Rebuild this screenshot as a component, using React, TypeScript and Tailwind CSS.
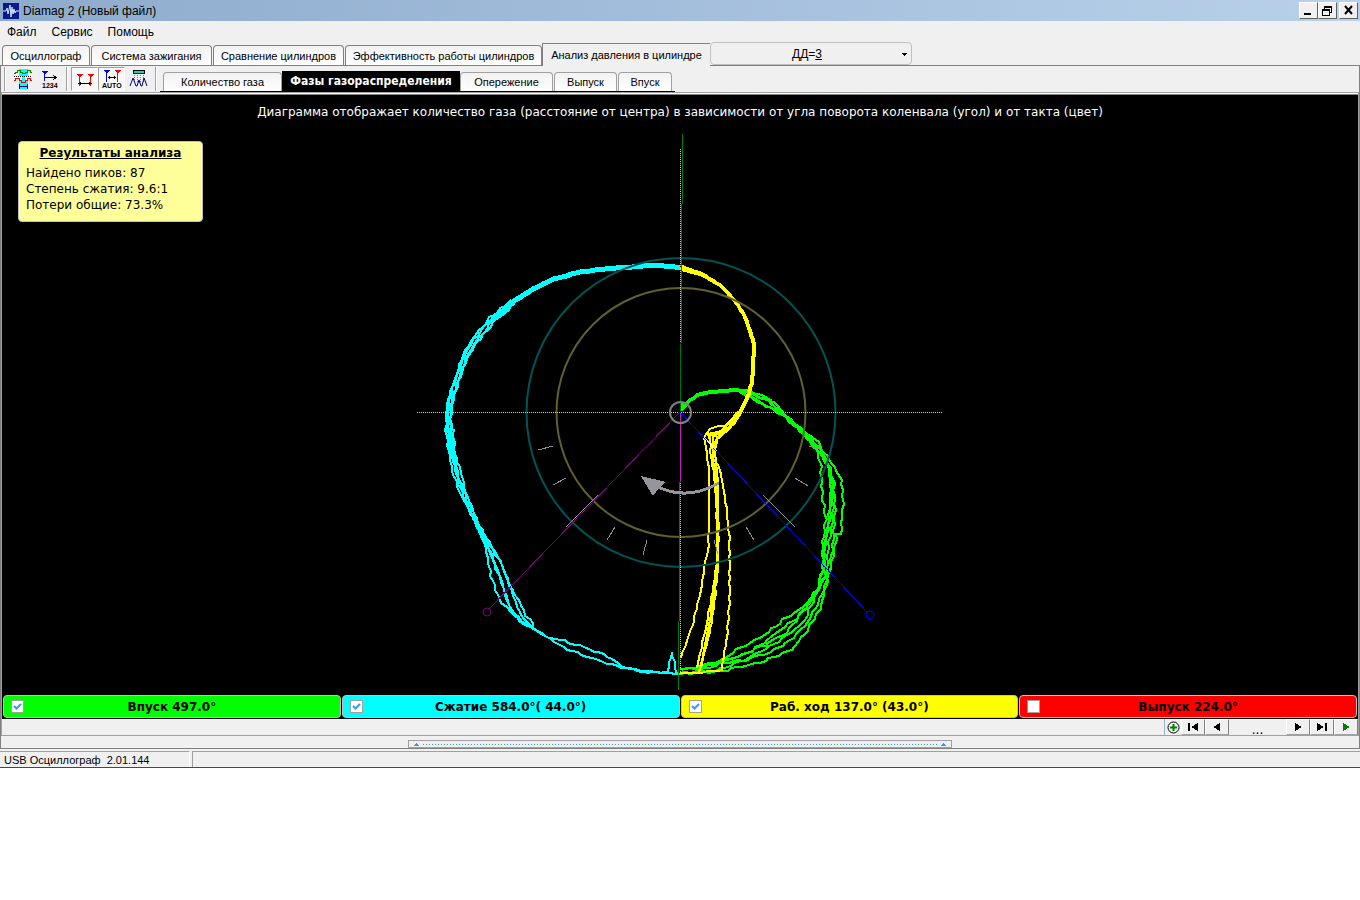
import { ReactNode, useState } from "react";

type Point = [number, number];

const mainTabs = [
  { label: "Осциллограф", width: "w-[88px]" },
  { label: "Система зажигания", width: "w-[121px]" },
  { label: "Сравнение цилиндров", width: "w-[131px]" },
  { label: "Эффективность работы цилиндров", width: "w-[197px]" },
];

const subTabs = [
  { label: "Опережение", width: "w-[93px]" },
  { label: "Выпуск", width: "w-[63px]" },
  { label: "Впуск", width: "w-[54px]" },
];

const phases = [
  { label: "Впуск 497.0°", color: "bg-[#00ff00]", on: true },
  { label: "Сжатие 584.0°( 44.0°)", color: "bg-[#00ffff]", on: true },
  { label: "Раб. ход 137.0° (43.0°)", color: "bg-[#ffff00]", on: true },
  { label: "Выпуск 224.0°", color: "bg-[#ff0000]", on: false },
];

// Adds small steps between the points so a strand looks like sampled data
const strand = (points: Point[], noise: number, seed: number) => {
  const out: string[] = [];
  for (let i = 0; i < points.length - 1; i++) {
    const [x1, y1] = points[i];
    const [x2, y2] = points[i + 1];
    const steps = Math.max(1, Math.round(Math.hypot(x2 - x1, y2 - y1) / 5));
    for (let s = 0; s < steps; s++) {
      const k = out.length + seed * 17;
      const dx = Math.sin(k * 2.3) * noise;
      const dy = Math.cos(k * 1.7) * noise;
      const t = s / steps;
      out.push(
        `${Math.round(x1 + (x2 - x1) * t + dx)},${Math.round(y1 + (y2 - y1) * t + dy)}`,
      );
    }
  }
  const last = points[points.length - 1];
  out.push(`${last[0]},${last[1]}`);
  return out.join(" ");
};

const compressionTop: Point[] = [
  [680, 267], [653, 265], [627, 267], [600, 269], [580, 272], [553, 279],
  [533, 289], [513, 302], [492, 320], [475, 340], [465, 357], [457, 380],
  [451, 397], [449, 417], [450, 437], [453, 460],
];

const compression: Point[][] = [
  [[455, 380], [446, 408], [446, 430], [451, 467], [456, 482], [462, 497], [473, 518], [482, 537], [487, 553], [491, 576], [496, 590], [502, 604], [510, 610], [520, 621], [535, 630], [550, 639], [565, 640], [567, 644], [580, 645], [590, 650], [603, 654], [612, 659], [617, 664], [630, 669], [647, 672], [667, 673], [672, 652], [676, 672], [680, 674]],
  [[453, 430], [455, 453], [461, 472], [466, 493], [473, 510], [480, 527], [487, 538], [497, 555], [504, 570], [510, 587], [520, 602], [525, 615], [530, 619], [534, 628], [550, 639], [563, 647], [577, 653], [597, 660], [617, 666], [640, 671], [680, 674]],
  [[450, 430], [454, 462], [460, 482], [470, 508], [482, 533], [492, 556], [500, 575], [506, 596], [512, 612], [524, 623], [535, 630]],
  [[449, 430], [453, 458], [459, 484], [469, 510], [480, 532], [488, 549], [498, 573], [504, 588], [508, 605], [518, 618], [535, 630]],
  [[452, 440], [458, 476], [468, 500], [478, 522], [490, 546], [503, 566], [508, 582], [514, 598], [521, 616], [535, 630]],
];

const powerTop: Point[] = [
  [681, 267], [700, 273], [720, 285], [735, 301], [743, 313], [750, 330],
  [754, 345], [753, 363], [752, 383], [747, 398], [740, 413], [732, 425],
];

const power: Point[][] = [
  [[740, 413], [728, 424], [710, 429], [704, 437], [707, 453], [709, 473], [709, 527], [708, 550], [704, 567], [701, 590], [692, 627], [681, 658]],
  [[740, 413], [732, 425], [713, 437], [713, 460], [716, 477], [717, 530], [717, 577], [712, 623], [702, 663], [699, 673]],
  [[742, 410], [730, 428], [716, 440], [712, 455], [720, 470], [725, 497], [729, 533], [730, 593], [727, 637], [722, 670], [697, 673], [680, 673]],
  [[740, 415], [724, 432], [710, 436], [711, 456], [716, 490], [719, 530], [717, 563], [713, 587], [707, 623], [697, 668]],
  [[738, 412], [722, 430], [708, 434], [713, 450], [715, 480], [718, 540], [716, 580], [709, 628], [701, 668]],
  [[742, 411], [727, 431], [717, 437], [715, 455], [718, 480], [718, 570], [712, 610], [703, 655], [699, 672]],
];

const intakeTop: Point[] = [
  [681, 410], [687, 403], [697, 395], [710, 392], [737, 390], [750, 392],
];

const intake: Point[][] = [
  [[750, 392], [765, 397], [775, 403], [782, 413], [803, 430], [817, 452], [821, 463], [822, 497], [826, 520], [822, 547], [823, 570], [817, 590], [803, 607], [783, 620], [760, 638], [732, 652], [723, 660], [710, 665], [682, 670]],
  [[737, 390], [750, 397], [763, 404], [777, 412], [793, 423], [807, 433], [818, 442], [827, 457], [832, 463], [842, 480], [843, 500], [841, 533], [837, 535], [833, 557], [828, 577], [820, 610], [807, 630], [792, 650], [760, 662], [723, 671], [680, 673]],
  [[745, 391], [770, 401], [785, 415], [805, 434], [820, 448], [832, 473], [833, 497], [832, 527], [828, 547], [827, 573], [815, 597], [803, 623], [787, 635], [770, 647], [743, 660], [720, 664], [690, 673]],
  [[745, 393], [766, 406], [780, 412], [800, 431], [814, 446], [828, 462], [831, 490], [829, 520], [824, 550], [825, 575], [812, 600], [796, 620], [786, 633], [765, 645], [742, 655], [722, 662], [700, 668], [680, 669]],
  [[748, 391], [772, 404], [790, 420], [810, 440], [824, 460], [834, 480], [835, 510], [833, 545], [829, 572], [822, 595], [808, 622], [790, 641], [770, 652], [740, 662], [715, 671], [680, 674]],
  [[742, 391], [768, 400], [788, 418], [808, 435], [822, 452], [830, 470], [831, 510], [827, 535], [823, 565], [818, 590], [800, 615], [780, 630], [768, 640], [744, 655], [720, 661], [690, 668]],
];

const ticks = [
  "M538 450L553 446", "M553 485L566 478", "M566 527L598 495", "M607 540L615 527",
  "M643 555L647 540", "M754 540L746 527", "M808 486L795 478", "M795 527L763 495",
  "M823 450L809 446", "M718 554L714 540",
].join("");

const PhaseDiagram = () => (
  <svg
    className="mx-auto block h-[560px] w-[540px]"
    viewBox="410 130 540 560"
    fill="none"
    shapeRendering="crispEdges"
    role="img"
    aria-label="Фазы газораспределения"
  >
    {/* Curves */}
    <g stroke="#00ff00" strokeWidth="2">
      <polyline points={strand(intakeTop, 0, 1)} strokeWidth="4" />
      <path d="M680 404L690 400L681 412Z" fill="#00ff00" stroke="none" />
      {intake.map((points, i) => (
        <polyline key={i} points={strand(points, 1, i)} />
      ))}
    </g>
    <g stroke="#00ffff" strokeWidth="2">
      <polyline points={strand(compressionTop.slice(0, 9), 0, 1)} strokeWidth="5" />
      {[-2, -1, 1, 2].map((shift) => (
        <polyline
          key={shift}
          points={strand(
            compressionTop.slice(7).map(([x, y]): Point => [x + shift, y + shift]),
            0.7,
            shift,
          )}
        />
      ))}
      {compression.map((points, i) => (
        <polyline key={i} points={strand(points, 0.7, i)} />
      ))}
    </g>
    <g stroke="#ffff00" strokeWidth="2">
      <polyline points={strand(powerTop, 0, 1)} strokeWidth="4" />
      <path d="M681 264V271L700 276L715 284L700 273Z" fill="#ffff00" stroke="none" />
      {power.map((points, i) => (
        <polyline key={i} points={strand(points, 0.5, i)} />
      ))}
    </g>

    {/* Scale circles */}
    <circle cx="681" cy="412.5" r="154.500" stroke="#005454" strokeWidth="2" shapeRendering="auto" />
    <circle cx="681" cy="412.5" r="124.500" stroke="#606030" strokeWidth="2" shapeRendering="auto" />
    <path d={ticks} stroke="#909090" />

    {/* Axes */}
    <path d="M417 412.5H943M680.5 149V672" stroke="#d0d0d0" strokeDasharray="1 1" />
    <path d="M682.5 134V204M681.5 204V343M680.5 343V412M679.5 482V621M678.5 621V690" stroke="#008000" />
    <path d="M680.5 343V412" stroke="#800080" strokeDasharray="1 1" />
    <path d="M680.5 412V482" stroke="#c020c0" />
    <path d="M680 412L489 609" stroke="#780078" />
    <circle cx="487" cy="612" r="4" stroke="#800080" shapeRendering="auto" />
    <path d="M680 412L868 613" stroke="#0000ff" />
    <circle cx="870" cy="615" r="4" stroke="#0000ff" shapeRendering="auto" />
    <path d="M704 437L717 451" stroke="#ffffff" />
    <circle cx="680.5" cy="412.5" r="10.500" stroke="#808080" strokeWidth="2" shapeRendering="auto" />

    {/* Rotation arrow */}
    <path d="M658 487Q688 501 719 483" stroke="#98949c" strokeWidth="3" />
    <path d="M641 476L666 482L660 487L653 496Z" fill="#98949c" />
  </svg>
);

const Icon = ({ children }: { children: ReactNode }) => (
  <svg className="h-5 w-5 overflow-visible" viewBox="0 0 20 20" fill="none" shapeRendering="crispEdges">
    {children}
  </svg>
);

const ToolButton = ({
  label,
  pressed,
  children,
}: {
  label: string;
  pressed?: boolean;
  children: ReactNode;
}) => (
  <button
    aria-label={label}
    className={`flex h-6 w-[27px] items-center justify-center border ${
      pressed
        ? "border-t-[#a0a0a0] border-r-white border-b-white border-l-[#a0a0a0] bg-[#f8f8f8]"
        : "border-transparent"
    }`}
  >
    {children}
  </button>
);

const Separator = () => (
  <span className="mx-[3px] h-6 w-[2px] border-l border-[#a0a0a0] bg-white" />
);

const PlayButton = ({ label, path, color }: { label: string; path: string; color: string }) => (
  <button
    aria-label={label}
    className="flex h-4 w-6 items-center justify-center border border-t-white border-r-[#808080] border-b-[#a0a0a0] border-l-white"
  >
    <svg className={`h-2 w-3 ${color}`} viewBox="0 0 12 8" fill="currentColor" shapeRendering="crispEdges">
      <path d={path} />
    </svg>
  </button>
);

const App = () => {
  const [checked, setChecked] = useState(phases.map((phase) => phase.on));

  const toggle = (index: number) =>
    setChecked(checked.map((value, i) => (i === index ? !value : value)));

  return (
    <div className="w-full bg-[#f0f0f0] font-['Liberation_Sans',sans-serif] text-[11px] leading-4 text-black">
      {/* Title bar */}
      <header className="flex h-[21px] items-center bg-linear-to-r from-[#8eabcd] to-[#b9d1ea] pr-[2px] pl-[3px]">
        <svg className="h-4 w-4" viewBox="0 0 16 16">
          <rect width="16" height="16" fill="#0a1a8c" />
          <path d="M0 8H3L4 5L5 11L7 2L8 14L9 4L10 11L11 6L12 10L13 8H16" fill="none" stroke="#d8e8ff" />
        </svg>
        <h1 className="ml-1 flex-1 text-xs">Diamag 2 (Новый файл)</h1>
        <button aria-label="Свернуть" className="h-[17px] w-[19px] border border-t-white border-r-[#606060] border-b-[#606060] border-l-white bg-[#f0f0f0]">
          <svg className="h-[15px] w-[17px]" viewBox="0 0 17 15" shapeRendering="crispEdges">
            <path d="M4 10H11V12H4Z" />
          </svg>
        </button>
        <button aria-label="Восстановить" className="h-[17px] w-[19px] border border-t-white border-r-[#606060] border-b-[#606060] border-l-white bg-[#f0f0f0]">
          <svg className="h-[15px] w-[17px]" viewBox="0 0 17 15" fill="none" stroke="#000" shapeRendering="crispEdges">
            <path d="M5.500 6V3.500H12.500V9.500H11M5 4.500H13M3.500 6.500H10.500V12.500H3.500ZM3 7.500H11" />
          </svg>
        </button>
        <button aria-label="Закрыть" className="ml-[2px] h-[17px] w-[19px] border border-t-white border-r-[#606060] border-b-[#606060] border-l-white bg-[#f0f0f0]">
          <svg className="h-[15px] w-[17px]" viewBox="0 0 17 15" fill="none" stroke="#000" strokeWidth="2">
            <path d="M5 3L12 11M12 3L5 11" />
          </svg>
        </button>
      </header>

      {/* Menu */}
      <nav className="flex h-[21px] items-center gap-[15px] pl-[7px] text-xs">
        <button>Файл</button>
        <button>Сервис</button>
        <button>Помощь</button>
      </nav>

      {/* Main tabs */}
      <div className="flex h-6 items-end border-b border-[#808080] pl-[2px]">
        {mainTabs.map((tab) => (
          <button
            key={tab.label}
            className={`mr-px h-5 rounded-t-sm border border-b-0 border-[#808080] bg-linear-to-b from-[#f2f2f2] to-white whitespace-nowrap ${tab.width}`}
          >
            {tab.label}
          </button>
        ))}
        <button className="-mb-px -ml-px h-[23px] w-[168px] border-t border-l border-[#808080] bg-[#f0f0f0] whitespace-nowrap">
          Анализ давления в цилиндре
        </button>
        <div className="relative h-[23px] w-[202px] self-start rounded-sm border border-[#c0c0c0]">
          <select aria-label="Датчик давления" className="h-full w-full appearance-none text-transparent">
            <option>ДД=3</option>
          </select>
          <span aria-hidden="true" className="pointer-events-none absolute inset-0 flex items-center justify-center pr-2 text-xs">
            ДД=<u>3</u>
          </span>
          <svg className="pointer-events-none absolute top-[10px] right-1 h-[3px] w-[5px]" viewBox="0 0 5 3" shapeRendering="crispEdges">
            <path d="M0 0H5L3 3H2Z" />
          </svg>
        </div>
      </div>

      <main className="border-x border-b border-[#808080]">
        {/* Toolbar */}
        <div className="flex h-[26px] items-end">
          <div className="flex h-full flex-none items-center">
            <Separator />
            <ToolButton label="Форма сигнала">
              <Icon>
                <path d="M6 0H15V7H12V12H15V20H6V12H9V7H6Z" fill="#00ffff" />
                <path d="M1 4.500H2V3.500H4V1.500H7V3.500H9V4.500H12V3.500H14V1.500H17V3.500H19" stroke="#008000" />
                <path d="M1 7.500H19" stroke="#000" strokeDasharray="1 1" />
                <path d="M1 11.500H2V9.500H6V11.500H8V13.500H12V11.500H14V9.500H17V11.500H19" stroke="#ff0000" />
                <path d="M6 17.500H15M6.500 15V20M14.500 15V20" stroke="#0000a0" />
              </Icon>
            </ToolButton>
            <ToolButton label="Номер метки">
              <Icon>
                <path d="M1 2H8L5 5V12H4V5Z" fill="#0000ff" />
                <path d="M5 8.500H16M13 6L16 8.500L13 11" stroke="#000" />
                <text x="2" y="19" className="fill-black text-[7px] font-bold">1234</text>
              </Icon>
            </ToolButton>
            <Separator />
            <ToolButton label="Метки" pressed>
              <Icon>
                <path d="M1 5H8L5 8V17H4V8ZM12 5H19L16 8V17H15V8Z" fill="#ff0000" />
                <path d="M3 14.500H17M5.500 13V16M14.500 13V16" stroke="#000" />
              </Icon>
            </ToolButton>
            <ToolButton label="Автоматические метки" pressed>
              <Icon>
                <path d="M1 1H8L5 4V13H4V4Z" fill="#0000ff" />
                <path d="M12 1H19L16 4V13H15V4Z" fill="#ff0000" />
                <path d="M6 8.500H14M7.500 7V10M12.500 7V10" stroke="#000" />
                <text x="0" y="19" className="fill-black text-[7px] font-bold">AUTO</text>
              </Icon>
            </ToolButton>
            <ToolButton label="Пики">
              <Icon>
                <path d="M4 1H16V5H4Z" fill="#000" />
                <path d="M5 2H15V4H5Z" fill="#00e0c0" />
                <path d="M5.500 6V14M8.500 6V14M11.500 6V14M14.500 6V14" stroke="#808080" strokeDasharray="1 1" />
                <path d="M1 17L4 9L7 17L8 17L10 11L12 17L13 17L15 9L18 17" stroke="#000080" shapeRendering="auto" />
              </Icon>
            </ToolButton>
            <Separator />
          </div>
          <div className="flex h-[21px] items-end border-b border-black pr-[2px] pl-[3px]">
            <button className="h-[19px] w-[119px] rounded-t-sm border border-b-0 border-[#a0a0a0] bg-linear-to-b from-[#f2f2f2] to-white">
              Количество газа
            </button>
            <button className="h-5 w-[178px] bg-black font-['DejaVu_Sans_Condensed',sans-serif] text-xs font-bold whitespace-nowrap text-white">
              Фазы газораспределения
            </button>
            {subTabs.map((tab) => (
              <button
                key={tab.label}
                className={`mr-px h-[19px] rounded-t-sm border border-b-0 border-[#a0a0a0] bg-linear-to-b from-[#f2f2f2] to-white ${tab.width}`}
              >
                {tab.label}
              </button>
            ))}
          </div>
        </div>

        {/* Diagram */}
        <section className="border-t border-[#a0a0a0]">
          <div className="border-x border-[#a0a0a0]">
            <div className="h-[2px] border-b border-[#808080] bg-white" />
            <div className="relative bg-black pb-[5px] font-['DejaVu_Sans',sans-serif] text-xs leading-4">
              <p className="h-[35px] pt-[9px] text-center text-white">
                Диаграмма отображает количество газа (расстояние от центра) в зависимости от угла поворота коленвала (угол) и от такта (цвет)
              </p>
              <PhaseDiagram />
              <aside className="absolute top-[46px] left-4 h-[81px] w-[185px] rounded-sm border border-[#c0c0c0] bg-[#ffff99] px-[7px] pt-[3px]">
                <h2 className="mb-1 text-center font-bold underline">Результаты анализа</h2>
                <p>Найдено пиков: 87</p>
                <p>Степень сжатия: 9.6:1</p>
                <p>Потери общие: 73.3%</p>
              </aside>
            </div>

            {/* Phase switches */}
            <div className="grid grid-cols-4 gap-px border-b border-black bg-black px-px font-['DejaVu_Sans',sans-serif]">
              {phases.map((phase, i) => (
                <label
                  key={phase.label}
                  className={`flex h-[23px] items-center rounded-sm border border-[#c0c0c0] px-[7px] ${phase.color}`}
                >
                  <span className="relative h-[13px] w-[13px]">
                    <input
                      type="checkbox"
                      checked={checked[i]}
                      onChange={() => toggle(i)}
                      className="block h-[13px] w-[13px] appearance-none border border-[#a0a0a0] bg-white"
                    />
                    {checked[i] && (
                      <svg className="pointer-events-none absolute inset-0 h-[13px] w-[13px]" viewBox="0 0 13 13" fill="none">
                        <path d="M3 6L5.500 8.500L10 4" stroke="#3399ff" strokeWidth="2" />
                      </svg>
                    )}
                  </span>
                  <span className="flex-1 pr-[13px] text-center text-xs font-bold whitespace-pre">
                    {phase.label}
                  </span>
                </label>
              ))}
            </div>

            {/* Player */}
            <div className="flex h-[17px] justify-end border-b border-[#a0a0a0]">
              <button aria-label="Добавить" className="flex h-4 w-[17px] items-center justify-center border-l border-[#99b4d1]">
                <svg className="h-[13px] w-[13px]" viewBox="0 0 13 13" fill="none">
                  <circle cx="6.5" cy="6.5" r="5.500" stroke="#000" />
                  <path d="M3 6.500H10M6.500 3V10" stroke="#008000" strokeWidth="2" />
                </svg>
              </button>
              <PlayButton label="В начало" path="M1 0H3V8H1ZM11 0V8L4 4Z" color="text-black" />
              <PlayButton label="Назад" path="M9 0V8L2 4Z" color="text-black" />
              <span className="w-[57px] text-center text-sm">...</span>
              <PlayButton label="Вперёд" path="M3 0V8L10 4Z" color="text-black" />
              <PlayButton label="В конец" path="M1 0V8L8 4ZM9 0H11V8H9Z" color="text-black" />
              <PlayButton label="Пуск" path="M3 0V8L10 4Z" color="text-[#008000]" />
            </div>
          </div>

          {/* Splitter */}
          <div className="flex h-3 items-end justify-center">
            <div className="flex h-2 w-2/5 items-center justify-between border border-[#a0a0a0] px-[5px]">
              <svg className="h-[3px] w-[5px]" viewBox="0 0 5 3" fill="#3399ff" shapeRendering="crispEdges">
                <path d="M2 0H3L5 3H0Z" />
              </svg>
              <span className="mx-1 h-px flex-1 bg-[repeating-linear-gradient(90deg,#3399ff_0_1px,transparent_1px_3px)]" />
              <svg className="h-[3px] w-[5px]" viewBox="0 0 5 3" fill="#3399ff" shapeRendering="crispEdges">
                <path d="M2 0H3L5 3H0Z" />
              </svg>
            </div>
          </div>
        </section>
      </main>

      {/* Status bar */}
      <footer className="flex h-[19px] gap-[2px] border-b border-[#404850] pt-[2px]">
        <p className="w-[190px] border-t border-r border-t-[#a0a0a0] border-r-white pl-1 whitespace-pre">
          USB Осциллограф  2.01.144
        </p>
        <p className="flex-1 border-t border-l border-[#a0a0a0]" />
      </footer>
    </div>
  );
};

export default App;
